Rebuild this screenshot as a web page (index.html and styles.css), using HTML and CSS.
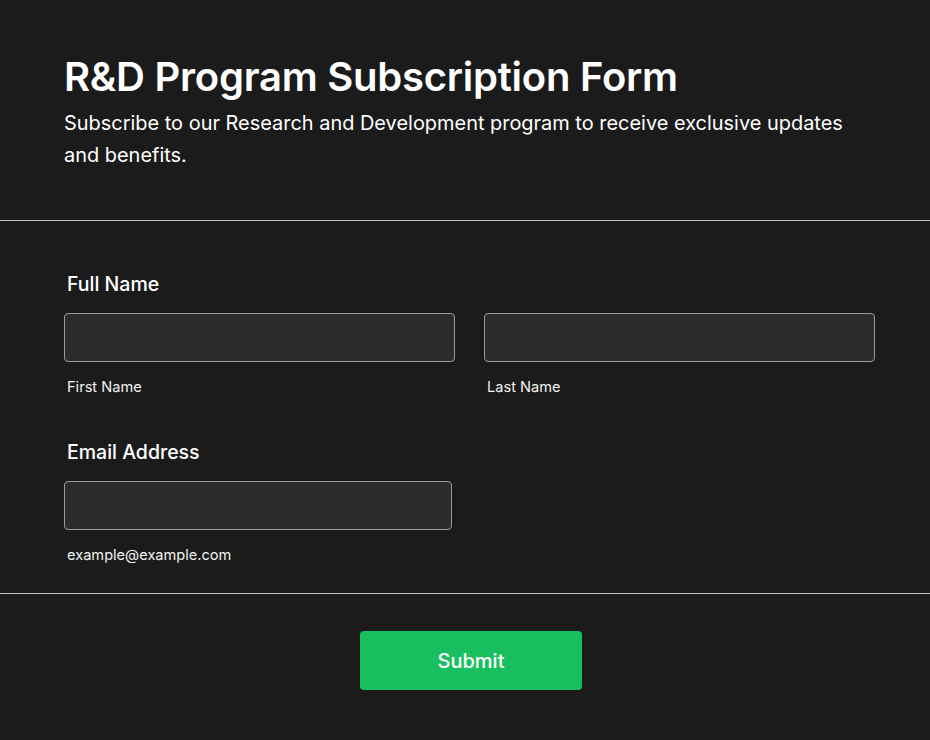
FILE: index.html
```html
<!DOCTYPE html>
<html lang="en">
<head>
<meta charset="utf-8">
<title>R&amp;D Program Subscription Form</title>
<link rel="stylesheet" href="styles.css">
</head>
<body>
<form class="page">
  <header class="intro">
    <h1 class="title">R&amp;D Program Subscription Form</h1>
    <p class="lead">Subscribe to our Research and Development program to receive exclusive updates and benefits.</p>
  </header>
  <section class="fields">
    <div class="field">
      <label class="label">Full Name</label>
      <div class="name-row">
        <div class="sub">
          <input class="input" type="text" aria-label="First Name">
          <span class="hint">First Name</span>
        </div>
        <div class="sub">
          <input class="input" type="text" aria-label="Last Name">
          <span class="hint">Last Name</span>
        </div>
      </div>
    </div>
    <div class="field field-email">
      <label class="label">Email Address</label>
      <div class="sub email">
        <input class="input" type="email" aria-label="Email Address">
        <span class="hint">example@example.com</span>
      </div>
    </div>
  </section>
  <footer class="actions">
    <button class="submit" type="button">Submit</button>
  </footer>
</form>
</body>
</html>
```

FILE: styles.css
```css
* { box-sizing: border-box; }
html, body { margin: 0; padding: 0; }
body {
  background: #1b1b1b;
  color: #ffffff;
  font-family: Inter, "Noto Sans", "Liberation Sans", sans-serif;
  min-height: 740px;
}
.page { display: flex; flex-direction: column; }
.intro {
  padding: 53px 64px 49px 64px;
  border-bottom: 1px solid #c4c4c4;
}
.title {
  margin: 0;
  font-size: 40px;
  line-height: 48px;
  font-weight: 600;
  letter-spacing: -0.25px;
}
.lead {
  margin: 6px 0 0 0;
  font-size: 19.95px;
  line-height: 32px;
  font-weight: 400;
  max-width: 800px;
}
.fields {
  padding: 51px 64px 28px 64px;
  border-bottom: 1px solid #c4c4c4;
  display: flex;
  flex-direction: column;
  gap: 43px;
}
.field { display: flex; flex-direction: column; }
.label {
  font-size: 19.5px;
  line-height: 24px;
  font-weight: 500;
  padding-left: 3px;
  margin-bottom: 17px;
}
.name-row {
  display: grid;
  grid-template-columns: 391px 391px;
  column-gap: 29px;
}
.sub { display: flex; flex-direction: column; gap: 15px; }
.email { width: 388px; }
.input {
  height: 49px;
  width: 100%;
  background: #2c2c2c;
  border: 1px solid #9a9a9a;
  border-radius: 4px;
  color: #fff;
  font: inherit;
  padding: 0 12px;
  margin: 0;
}
.hint {
  font-size: 14.6px;
  line-height: 20px;
  padding-left: 3px;
  color: #f2f2f2;
}
.actions {
  padding: 37px 0 50px 12px;
  display: flex;
  justify-content: center;
}
.submit {
  width: 222px;
  height: 59px;
  background: #19bf5f;
  border: none;
  border-radius: 4px;
  color: #ffffff;
  font-family: inherit;
  font-size: 20px;
  font-weight: 500;
  cursor: pointer;
}
```
